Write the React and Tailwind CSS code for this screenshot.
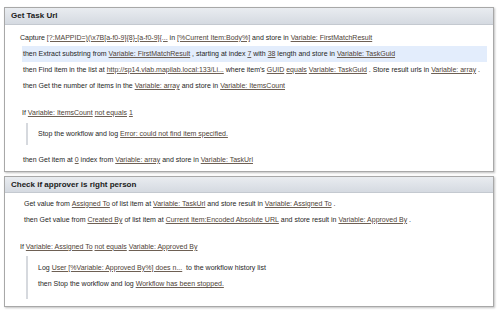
import React from "react";

const L = ({ children }) => (
  <span className="underline text-[#4e4136] decoration-[#6e6054]">{children}</span>
);

const Row = ({ children, className = "" }) => (
  <div className={"flex items-center h-[16px] whitespace-nowrap " + className}>{children}</div>
);

const REGEX = "[?:MAPPID=)(\\x7B[a-f0-9]{8}-[a-f0-9]{...";

export default function App() {
  return (
    <div
      className="w-[500px] h-[311px] bg-white text-[#262626] text-[7px] overflow-hidden pt-[7px] pl-[4px]"
      style={{ fontFamily: '"Liberation Sans", Arial, sans-serif' }}
    >
      {/* Panel 1 */}
      <div className="w-[490px] h-[165px] border border-[#a8a8a8] shadow-[1px_1px_2px_rgba(0,0,0,0.25)] bg-white flex flex-col">
        <div className="h-[17px] shrink-0 bg-gradient-to-b from-[#e9ecf0] to-[#d5dae1] border-b border-[#c4c9d0] flex items-center pl-[6px] font-bold text-[8px] text-[#1a1a1a]">
          Get Task Url
        </div>
        <div className="flex flex-col pt-[5px]">
          <Row className="pl-[15px]">
            Capture&nbsp;<L>{REGEX}</L>&nbsp;in&nbsp;<L>[%Current Item:Body%]</L>&nbsp;and store in&nbsp;<L>Variable: FirstMatchResult</L>
          </Row>
          <Row className="ml-[17px] mr-[6px] pl-[1px] bg-[#e3edfc]">
            then Extract substring from&nbsp;<L>Variable: FirstMatchResult</L>&nbsp;, starting at index&nbsp;<L>7</L>&nbsp;with&nbsp;<L>38</L>&nbsp;length and store in&nbsp;<L>Variable: TaskGuid</L>
          </Row>
          <Row className="pl-[18px]">
            then Find item in the list at&nbsp;<L>http://sp14.vlab.mapilab.local:133/Li...</L>&nbsp;where item's&nbsp;<L>GUID</L>&nbsp;<L>equals</L>&nbsp;<L>Variable: TaskGuid</L>&nbsp;. Store result urls in&nbsp;<L>Variable: array</L>&nbsp;.
          </Row>
          <Row className="pl-[18px]">
            then Get the number of items in the&nbsp;<L>Variable: array</L>&nbsp;and store in&nbsp;<L>Variable: ItemsCount</L>
          </Row>
          <div className="h-[11px]" />
          <Row className="pl-[17px]">
            If&nbsp;<L>Variable: ItemsCount</L>&nbsp;<L>not equals</L>&nbsp;<L>1</L>
          </Row>
          <div className="ml-[21px] mt-[2px] border-l-2 border-[#d6d9de] h-[22px] flex items-center pl-[10px] whitespace-nowrap">
            Stop the workflow and log&nbsp;<L>Error: could not find item specified.</L>
          </div>
          <div className="h-[7px]" />
          <Row className="pl-[18px]">
            then Get item at&nbsp;<L>0</L>&nbsp;index from&nbsp;<L>Variable: array</L>&nbsp;and store in&nbsp;<L>Variable: TaskUrl</L>
          </Row>
        </div>
      </div>

      {/* Panel 2 */}
      <div className="mt-[4px] w-[490px] h-[131px] border border-[#a8a8a8] shadow-[1px_1px_2px_rgba(0,0,0,0.25)] bg-white flex flex-col">
        <div className="h-[16px] shrink-0 bg-gradient-to-b from-[#e9ecf0] to-[#d5dae1] border-b border-[#c4c9d0] flex items-center pl-[6px] font-bold text-[8px] text-[#1a1a1a]">
          Check if approver is right person
        </div>
        <div className="flex flex-col pt-[3px]">
          <Row className="pl-[19px]">
            Get value from&nbsp;<L>Assigned To</L>&nbsp;of list item at&nbsp;<L>Variable: TaskUrl</L>&nbsp;and store result in&nbsp;<L>Variable: Assigned To</L>&nbsp;.
          </Row>
          <Row className="pl-[19px]">
            then Get value from&nbsp;<L>Created By</L>&nbsp;of list item at&nbsp;<L>Current Item:Encoded Absolute URL</L>&nbsp;and store result in&nbsp;<L>Variable: Approved By</L>&nbsp;.
          </Row>
          <div className="h-[11px]" />
          <Row className="pl-[15px]">
            If&nbsp;<L>Variable: Assigned To</L>&nbsp;<L>not equals</L>&nbsp;<L>Variable: Approved By</L>
          </Row>
          <div className="ml-[21px] mt-[1px] border-l-2 border-[#d6d9de] flex flex-col pl-[10px] pt-[4px] pb-[6px]">
            <Row>
              Log&nbsp;<L>User [%Variable: Approved By%] does n...</L>&nbsp;&nbsp;to the workflow history list
            </Row>
            <Row className="h-[17px]">
              then Stop the workflow and log&nbsp;<L>Workflow has been stopped.</L>
            </Row>
          </div>
        </div>
      </div>
    </div>
  );
}
